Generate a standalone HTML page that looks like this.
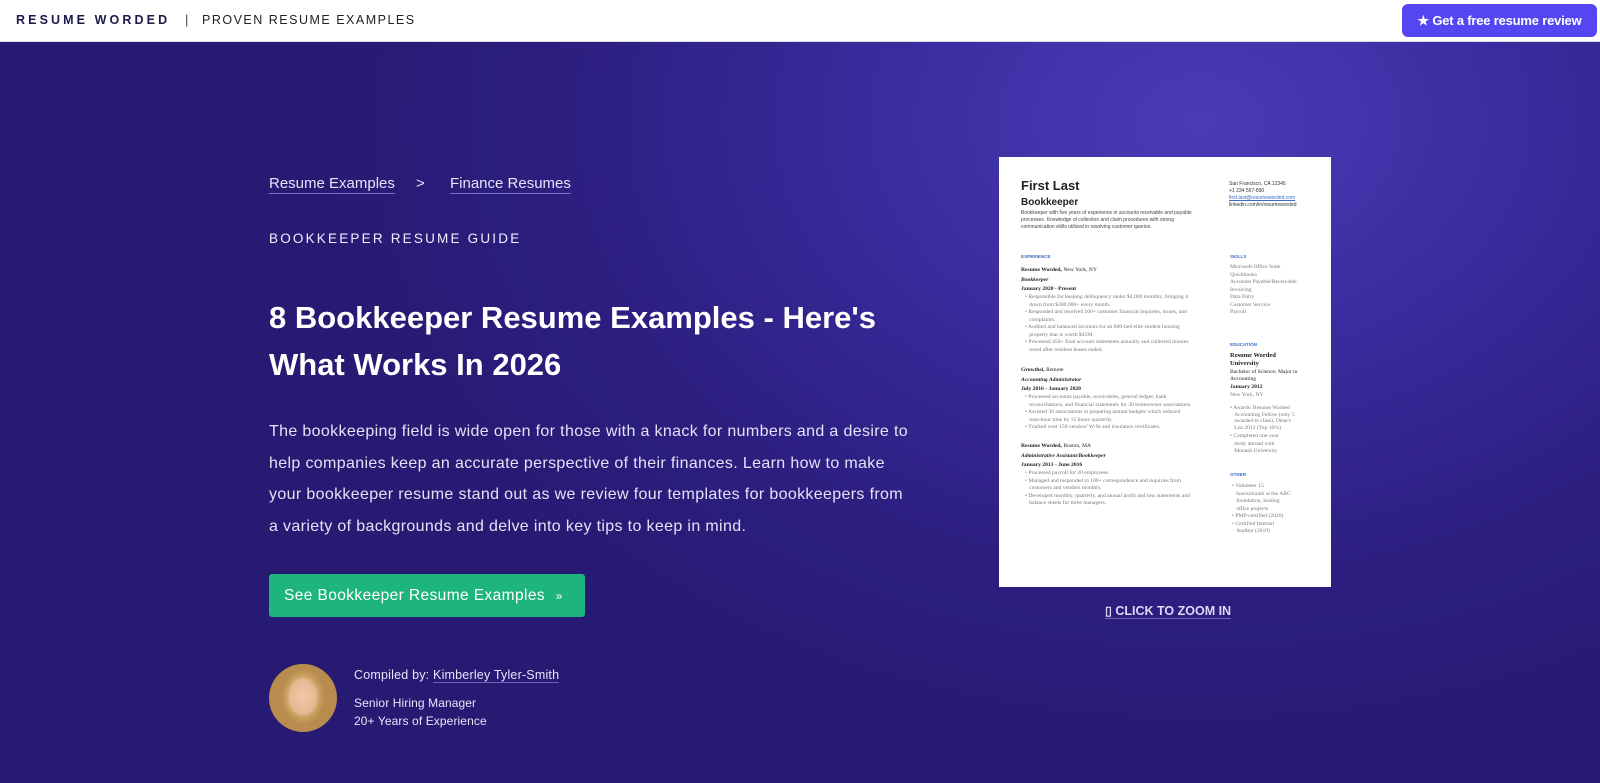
<!DOCTYPE html>
<html><head><meta charset="utf-8"><style>
*{margin:0;padding:0;box-sizing:border-box}
body{width:1600px;height:783px;overflow:hidden;font-family:"Liberation Sans",sans-serif;background:#2a1f78}
.top{position:absolute;left:0;top:0;width:1600px;height:42px;background:#fff;border-bottom:1px solid #ddd}
.logo{position:absolute;left:16px;top:13px;font-size:12.5px;font-weight:bold;letter-spacing:3.1px;color:#1c1a4a}
.sep{position:absolute;left:185px;top:12px;font-size:13px;color:#444}
.pre{position:absolute;left:202px;top:13px;font-size:12.5px;letter-spacing:1.5px;color:#222}
.cta{position:absolute;left:1402px;top:4px;width:195px;height:33px;background:#5446f0;border-radius:6px;color:#fff;font-size:13px;font-weight:bold;line-height:33px;text-align:center;letter-spacing:-0.2px}
.hero{position:absolute;left:0;top:42px;width:1600px;height:741px;background:radial-gradient(ellipse 900px 650px at 1200px 80px,#4a3cb6 0%,#3a2c9e 35%,#2c1f80 70%,#271a72 100%)}
.t{position:absolute;color:#fff}
.bc{font-size:15px;color:#e6e4f8;border-bottom:1px solid #7a70c8;padding-bottom:1px}
.res{position:absolute;left:999px;top:157px;width:332px;height:430px;background:#fff}
.r{position:absolute;font-family:"Liberation Serif",serif;font-size:5.6px;color:#777;line-height:7.5px;white-space:nowrap}
.rb{color:#222;font-weight:bold}
.rh{color:#3b6cc9;font-family:"Liberation Sans",sans-serif;font-size:4.6px;font-weight:bold}
</style></head><body>
<div class="top">
<div class="logo">RESUME WORDED</div><div class="sep">|</div>
<div class="pre">PROVEN RESUME EXAMPLES</div>
<div class="cta">★ Get a free resume review</div>
</div>
<div class="hero"></div>
<div class="t bc" style="left:269px;top:175px">Resume Examples</div>
<div class="t" style="left:416px;top:175px;font-size:15px;color:#e6e4f8">&gt;</div>
<div class="t bc" style="left:450px;top:175px">Finance Resumes</div>
<div class="t" style="left:269px;top:231px;font-size:13.5px;letter-spacing:2.2px;color:#f0eeff">BOOKKEEPER RESUME GUIDE</div>
<div class="t" style="left:269px;top:294px;font-size:31px;font-weight:bold;line-height:47px;width:700px;letter-spacing:0px">8 Bookkeeper Resume Examples - Here's<br>What Works In 2026</div>
<div class="t" style="left:269px;top:416px;font-size:16px;line-height:31.5px;width:645px;color:#e4e2f6;letter-spacing:0.35px">The bookkeeping field is wide open for those with a knack for numbers and a desire to help companies keep an accurate perspective of their finances. Learn how to make your bookkeeper resume stand out as we review four templates for bookkeepers from<br>a variety of backgrounds and delve into key tips to keep in mind.</div>
<div class="t" style="left:269px;top:574px;width:316px;height:43px;background:#1db57c;border-radius:3px;font-size:15.5px;line-height:43px;padding-left:15px;letter-spacing:0.4px">See Bookkeeper Resume Examples <span style="font-size:12px;margin-left:6px">»</span></div>
<div class="t" style="left:269px;top:664px;width:68px;height:68px;border-radius:50%;background:radial-gradient(ellipse 22px 28px at 50% 48%,#f0c9a8 0,#e6b892 60%,#c9a060 75%,#b78c4e 100%) ,#c4c6cc"></div>
<div class="t" style="left:354px;top:668px;font-size:12.5px;color:#e8e6fa;letter-spacing:0.2px">Compiled by: <span style="border-bottom:1px solid #6c63b8">Kimberley Tyler-Smith</span></div>
<div class="t" style="left:354px;top:694px;font-size:12px;color:#e8e6fa;letter-spacing:0.1px;line-height:18px">Senior Hiring Manager<br>20+ Years of Experience</div>
<div class="res">
<div class="r rb" style="left:22px;top:22px;font-size:13px;font-family:'Liberation Sans',sans-serif;line-height:14px">First Last</div>
<div class="r rb" style="left:22px;top:40px;font-size:10px;font-family:'Liberation Sans',sans-serif;line-height:11px">Bookkeeper</div>
<div class="r" style="left:22px;top:53px;font-family:'Liberation Sans',sans-serif;font-size:5px;color:#444;line-height:7px">Bookkeeper with five years of experience in accounts receivable and payable<br>processes. Knowledge of collection and claim procedures with strong<br>communication skills utilized in resolving customer queries.</div>
<div class="r" style="left:230px;top:24px;font-family:'Liberation Sans',sans-serif;font-size:5px;color:#333;line-height:7px">San Francisco, CA 12345<br>+1 234 567-890<br><span style="color:#3b6cc9;text-decoration:underline">first.last@resumeworded.com</span><br>linkedin.com/in/resumeworded</div>
<div class="r rh" style="left:22px;top:96px">EXPERIENCE</div>
<div class="r" style="left:22px;top:109px;line-height:9.5px;color:#222"><b>Resume Worded,</b> New York, NY<br><b><i>Bookkeeper</i></b><br><b>January 2020 - Present</b></div>
<div class="r" style="left:26px;top:137px">• Responsible for keeping delinquency under $4,000 monthly, bringing it<br>&nbsp;&nbsp;&nbsp;down from $300,000+ every month.<br>• Responded and resolved 100+ customer financial inquiries, issues, and<br>&nbsp;&nbsp;&nbsp;complaints.<br>• Audited and balanced accounts for an 800-bed elite student housing<br>&nbsp;&nbsp;&nbsp;property that is worth $45M.<br>• Processed 450+ final account statements annually and collected monies<br>&nbsp;&nbsp;&nbsp;owed after resident leases ended.</div>
<div class="r" style="left:22px;top:209px;line-height:9.5px;color:#222"><b>Growthsi,</b> Remote<br><b><i>Accounting Administrator</i></b><br><b>July 2016 - January 2020</b></div>
<div class="r" style="left:26px;top:237px">• Processed accounts payable, receivables, general ledger, bank<br>&nbsp;&nbsp;&nbsp;reconciliations, and financial statements for 30 homeowner associations.<br>• Assisted 30 associations in preparing annual budgets which reduced<br>&nbsp;&nbsp;&nbsp;man-hour time by 15 hours quarterly.<br>• Tracked over 150 vendors' W-9s and insurance certificates.</div>
<div class="r" style="left:22px;top:285px;line-height:9.5px;color:#222"><b>Resume Worded,</b> Boston, MA<br><b><i>Administrative Assistant/Bookkeeper</i></b><br><b>January 2013 - June 2016</b></div>
<div class="r" style="left:26px;top:313px">• Processed payroll for 20 employees.<br>• Managed and responded to 100+ correspondence and inquiries from<br>&nbsp;&nbsp;&nbsp;customers and vendors monthly.<br>• Developed monthly, quarterly, and annual profit and loss statements and<br>&nbsp;&nbsp;&nbsp;balance sheets for three managers.</div>
<div class="r rh" style="left:231px;top:96px">SKILLS</div>
<div class="r" style="left:231px;top:107px">Microsoft Office Suite<br>Quickbooks<br>Accounts Payable/Receivable<br>Invoicing<br>Data Entry<br>Customer Service<br>Payroll</div>
<div class="r rh" style="left:231px;top:184px">EDUCATION</div>
<div class="r rb" style="left:231px;top:195px;font-size:6.5px">Resume Worded<br>University</div>
<div class="r" style="left:231px;top:212px;color:#222;line-height:6.5px">Bachelor of Science; Major in<br>Accounting</div>
<div class="r rb" style="left:231px;top:227px">January 2012</div>
<div class="r" style="left:231px;top:235px">New York, NY</div>
<div class="r" style="left:231px;top:248px;line-height:6.5px">• Awards: Resume Worded<br>&nbsp;&nbsp;&nbsp;Accounting Fellow (only 5<br>&nbsp;&nbsp;&nbsp;awarded to class), Dean's<br>&nbsp;&nbsp;&nbsp;List 2012 (Top 10%)</div>
<div class="r" style="left:231px;top:276px">• Completed one-year<br>&nbsp;&nbsp;&nbsp;study abroad with<br>&nbsp;&nbsp;&nbsp;Monash University</div>
<div class="r rh" style="left:231px;top:314px">OTHER</div>
<div class="r" style="left:233px;top:326px">• Volunteer 15<br>&nbsp;&nbsp;&nbsp;hours/month at the ABC<br>&nbsp;&nbsp;&nbsp;foundation, leading<br>&nbsp;&nbsp;&nbsp;office projects<br>• PMP-certified (2020)<br>• Certified Internal<br>&nbsp;&nbsp;&nbsp;Auditor (2019)</div>
</div>
<div class="t" style="left:1105px;top:603px;font-size:12.5px;font-weight:bold;color:#ddd9f6;border-bottom:1px solid #6c63b8">▯ CLICK TO ZOOM IN</div>
</body></html>
